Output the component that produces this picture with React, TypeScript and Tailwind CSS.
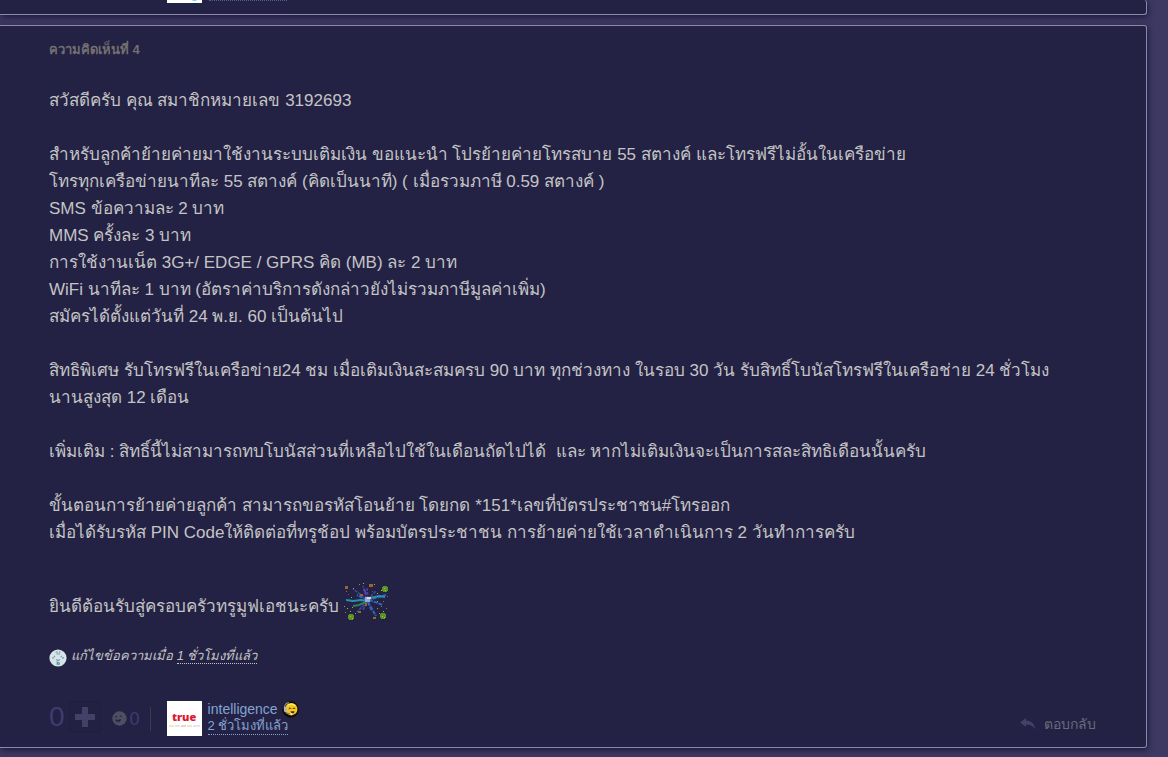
import React from 'react';

const bodyLines = [
  'สวัสดีครับ คุณ สมาชิกหมายเลข 3192693',
  '',
  'สำหรับลูกค้าย้ายค่ายมาใช้งานระบบเติมเงิน ขอแนะนำ โปรย้ายค่ายโทรสบาย 55 สตางค์ และโทรฟรีไม่อั้นในเครือข่าย',
  'โทรทุกเครือข่ายนาทีละ 55 สตางค์ (คิดเป็นนาที) ( เมื่อรวมภาษี 0.59 สตางค์ )',
  'SMS ข้อความละ 2 บาท',
  'MMS ครั้งละ 3 บาท',
  'การใช้งานเน็ต 3G+/ EDGE / GPRS คิด (MB) ละ 2 บาท',
  'WiFi นาทีละ 1 บาท (อัตราค่าบริการดังกล่าวยังไม่รวมภาษีมูลค่าเพิ่ม)',
  'สมัครได้ตั้งแต่วันที่ 24 พ.ย. 60 เป็นต้นไป',
  '',
  'สิทธิพิเศษ รับโทรฟรีในเครือข่าย24 ชม เมื่อเติมเงินสะสมครบ 90 บาท ทุกช่วงทาง ในรอบ 30 วัน รับสิทธิ์โบนัสโทรฟรีในเครือช่าย 24 ชั่วโมง',
  'นานสูงสุด 12 เดือน',
  '',
  'เพิ่มเติม : สิทธิ์นี้ไม่สามารถทบโบนัสส่วนที่เหลือไปใช้ในเดือนถัดไปได้\u00a0 และ หากไม่เติมเงินจะเป็นการสละสิทธิเดือนนั้นครับ',
  '',
  'ขั้นตอนการย้ายค่ายลูกค้า สามารถขอรหัสโอนย้าย โดยกด *151*เลขที่บัตรประชาชน#โทรออก',
  'เมื่อได้รับรหัส PIN Codeให้ติดต่อที่ทรูช้อป พร้อมบัตรประชาชน การย้ายค่ายใช้เวลาดำเนินการ 2 วันทำการครับ',
];

// x, y, colour
const sparks: [number, number, string][] = [
  [10, 8, '#b8a420'], [16, 4, '#a08c20'], [20, 3, '#c8b420'], [31, 4, '#b8a420'], [34, 13, '#c8b420'],
  [3, 11, '#7a8a20'], [8, 17, '#c08a20'], [38, 10, '#c8b420'], [3, 20, '#2a8a8a'], [1, 26, '#a0a020'],
  [4, 28, '#c8b420'], [2, 32, '#8a8a20'], [9, 27, '#c0a020'], [7, 31, '#b0a020'], [12, 33, '#a8a020'],
  [34, 28, '#c0a020'], [36, 33, '#c8b420'], [38, 26, '#8a6a90'], [34, 21, '#c0a020'], [40, 21, '#4a8a30'],
  [40, 31, '#c0b020'], [43, 28, '#907020'], [29, 11, '#5a4aa0'], [5, 14, '#505090'], [44, 16, '#2a7ac0'],
];

const Firework: React.FC = () => (
  <svg viewBox="0 0 48 40" className="inline-block h-10 w-12 align-bottom" aria-hidden="true">
    <path d="M24 19L10 9M24 19L20 6M25 19L24 8M25 19L33 11M25 20L20 30M24 22L14 32" stroke="#4046a0" strokeWidth="1.6" strokeDasharray="3 1" />
    <path d="M24 20L14 15M25 20L43 15M26 20L40 25M25 22L33 36M25 22L29 31" stroke="#3562b8" strokeWidth="2" strokeDasharray="4 1" />
    <path d="M3 20l7 1 8-1 6 1M27 18l9-2 6 1" stroke="#2b8fb4" strokeWidth="2" fill="none" />
    <path d="M10 26l6-1 7-3" stroke="#2e7d62" strokeWidth="2" fill="none" />
    <path d="M21 9l2 5" stroke="#6a3fa6" strokeWidth="2" />
    {sparks.map(([x, y, c]) => (
      <rect key={`${x}-${y}`} x={x} y={y} width="1" height="1" fill={c} />
    ))}
    <path d="M22 17h5v5h-5z" fill="#93a8de" />
    <path d="M24 17h4v2h-4z" fill="#eadb9d" />
    <path d="M17 14h3v2h-3zM22 23h2v3h-2zM15 31h3v2h-3zM30 37h3v2h-3zM2 6h3v3H2zM26 4h4v3h-4z" fill="#96682c" />
    <path d="M5 35h6v4H5zM6 34h4v6H6zM37 34h6v4h-6zM38 33h4v6h-4zM39 7h6v4h-6zM40 6h4v6h-4z" fill="#5c9422" />
    <path d="M7 36h1v1H7zM9 38h1v1H9zM39 36h1v1h-1zM41 37h1v1h-1zM41 8h1v1h-1zM42 10h1v1h-1z" fill="#a5c431" />
  </svg>
);

const DiscIcon: React.FC = () => (
  <svg viewBox="0 0 18 18" className="h-[18px] w-[18px] shrink-0" aria-hidden="true">
    <circle cx="9" cy="9" r="8.6" fill="#d8e3e7" />
    <path d="M6.7 3.2h2M10 3.2h1.5M7.5 5h3.5M3 8.8h2M13 8.8h2M5 7l1 1M12.8 7l-1 1M7 10.5l2 1 2-1" stroke="#6d9fb4" strokeWidth="1.2" fill="none" />
    <path d="M8.2 12.5v2.8h2v-1.6h-2" stroke="#4a8fa8" strokeWidth="1.1" fill="none" />
  </svg>
);

const SmileIcon: React.FC = () => (
  <svg viewBox="0 0 15 15" className="h-[15px] w-[15px]" aria-hidden="true">
    <circle cx="7.5" cy="7.5" r="7.2" fill="#504e63" />
    <path d="M3.2 6.2l1.8-.8M7.8 5l1.8.3" stroke="#242244" strokeWidth="1.2" />
    <path d="M3.2 8.3c2 .8 4 .7 5.800-.2-.2 2-1.200 3.300-2.800 3.400-1.600 0-2.700-1.200-3-3.200z" fill="#242244" />
    <path d="M4.8 10.3c.8-.5 1.600-.5 2.400 0l-1.200.8z" fill="#504e63" />
  </svg>
);

const HeadsetIcon: React.FC = () => (
  <svg viewBox="0 0 17 17" className="h-[17px] w-[17px]" aria-hidden="true">
    <circle cx="8.5" cy="8.5" r="8.2" fill="#100e0c" />
    <circle cx="9.2" cy="8.2" r="6.2" fill="#f3c81c" />
    <path d="M5.5 4.500C7.500 2.500 11.500 2.500 13.500 5" stroke="#ffe678" strokeWidth="1.2" fill="none" />
    <path d="M2.5 9C1.500 4 4.500 1.600 7 1.600" stroke="#8f8f8f" strokeWidth="1.2" fill="none" />
    <rect x="2" y="6" width="2.8" height="5" rx="1" fill="#b4b4b4" />
    <path d="M3.5 11.5l5 1.8" stroke="#777" strokeWidth="1.2" />
    <path d="M6.7 8l1.3-1.2L9.2 8M10.8 8l1.2-1.2L13.2 8" stroke="#4b3206" strokeWidth="1" fill="none" />
    <path d="M8.5 10.3h4c-.4 1.600-1 2.300-2 2.300s-1.700-.7-2-2.300z" fill="#5c2a08" />
    <rect x="8.5" y="12" width="1.8" height="1.8" fill="#eee" />
  </svg>
);

const Avatar: React.FC = () => (
  <div className="flex h-[35px] w-[35px] shrink-0 flex-col items-center justify-center bg-white">
    <span className="font-['Open_Sans',sans-serif] text-[11px] leading-3 font-extrabold text-[#e0182d]">true</span>
    <svg viewBox="0 0 31 2" className="mt-0.5 h-0.5 w-[31px]" aria-hidden="true">
      <path d="M0 1h5" stroke="#e6cf91" />
      <path d="M6 1h5" stroke="#a9d7d3" />
      <path d="M12 1h5" stroke="#e2a0ac" />
      <path d="M18 1h5" stroke="#d8d38f" />
      <path d="M24 1h7" stroke="#ddc3e0" />
    </svg>
  </div>
);

const cardClass = 'mr-[21px] rounded-r-[3px] border-y border-r border-[#8d88ab] bg-[#232244] shadow-[1px_2px_6px_#1b1838]';

const App: React.FC = () => {
  return (
    <div className="min-h-screen overflow-hidden bg-[#3e3963] font-['Liberation_Sans',Arial,sans-serif] text-[#c5c4c4]">
      {/* tail of the previous comment */}
      <div className={`${cardClass} flex h-[15px] items-end overflow-hidden border-t-0 pb-[11px] pl-[167px]`}>
        <svg viewBox="0 0 35 3" className="h-[3px] w-[35px]" aria-hidden="true">
          <path d="M0 0h35v3H0z" fill="#fff" />
          <path d="M25 0h5l-1 1h-3z" fill="#7fd4ef" />
        </svg>
        <div className="mb-[2px] ml-[7px] w-[78px] border-b border-dotted border-[#5a5c88]" />
      </div>

      <article className={`${cardClass} mt-[10px] pl-[49px]`}>
        <h2 className="pt-[15px] text-[13px] leading-[18px] font-bold text-[#756f70]">ความคิดเห็นที่ 4</h2>

        <div className="mt-7 text-[17px] leading-[27px]">
          {bodyLines.map((line, i) => (
            <p key={i} className="min-h-[27px]">{line}</p>
          ))}
          <p className="mt-[34px] flex h-10 items-end gap-1">
            <span>ยินดีต้อนรับสู่ครอบครัวทรูมูฟเอชนะครับ</span>
            <Firework />
          </p>
        </div>

        <div className="mt-[27px] flex h-[22px] items-center gap-1 text-[13px] leading-5 italic">
          <DiscIcon />
          <span className="pb-1">
            แก้ไขข้อความเมื่อ <time className="border-b border-dotted border-[#c5c4c4]">1 ชั่วโมงที่แล้ว</time>
          </span>
        </div>

        <footer className="mt-8 flex items-start pr-[50px] pb-[11px]">
          <span className="text-[28px] leading-8 text-[#403b70]">0</span>
          <button type="button" aria-label="โหวต" className="ml-1 flex h-8 w-8 items-center justify-center rounded border border-[#1f1e3d] bg-[#222141]">
            <svg viewBox="0 0 20 20" className="h-5 w-5" aria-hidden="true">
              <path d="M7 0h6v7h7v6h-7v7H7v-7H0V7h7z" fill="#444169" />
            </svg>
          </button>
          <button type="button" className="ml-[11px] flex h-[35px] items-center gap-[3px] text-lg leading-6 text-[#403b70]">
            <SmileIcon />
            <span>0</span>
          </button>
          <div className="mr-4 ml-2.5 h-6 w-px self-center bg-[#3d3c48]" />
          <Avatar />
          <div className="ml-1.5">
            <div className="flex items-center gap-1">
              <a href="#intelligence" className="text-sm leading-[17px] text-[#84a3d3]">intelligence</a>
              <HeadsetIcon />
            </div>
            <a href="#comment4" className="block w-fit border-b border-dotted border-[#84a3d3] text-[13px] leading-4 text-[#84a3d3]">2 ชั่วโมงที่แล้ว</a>
          </div>
          <button type="button" className="ml-auto flex items-center gap-2 self-end text-sm leading-6 text-[#6c6a7b]">
            <svg viewBox="0 0 16 12" className="h-3 w-4" aria-hidden="true">
              <path d="M0 4.5L6 0v2.6c5.500.2 8.700 3.400 9.300 8.900C13.500 8.300 10.500 6.600 6 6.600V9z" fill="#444066" />
            </svg>
            <span>ตอบกลับ</span>
          </button>
        </footer>
      </article>
    </div>
  );
};

export default App;
